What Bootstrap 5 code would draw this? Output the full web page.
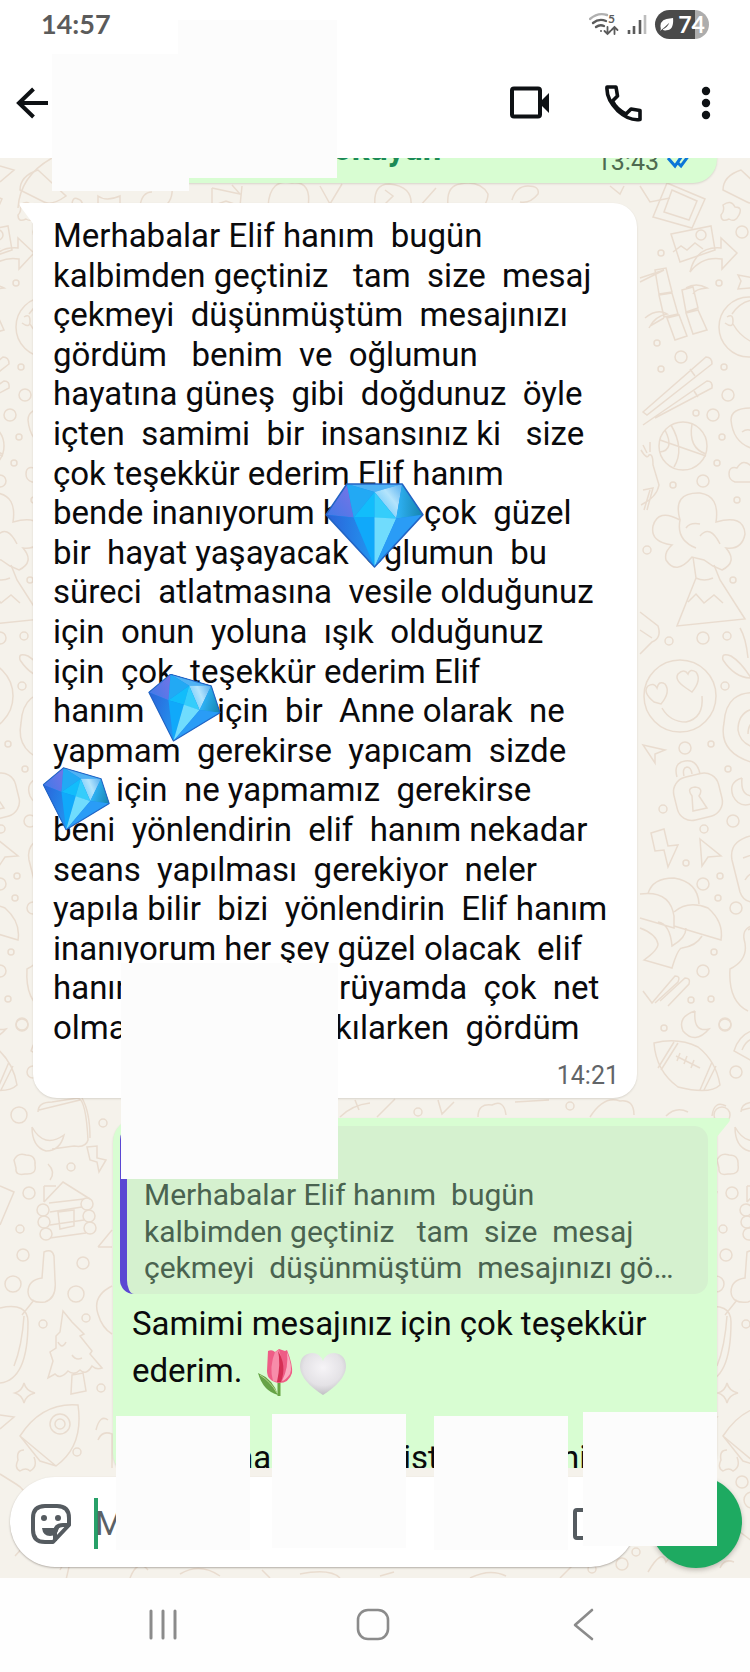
<!DOCTYPE html>
<html lang="tr">
<head>
<meta charset="utf-8">
<meta name="viewport" content="width=device-width, initial-scale=1">
<title>Sohbet</title>
<link href="https://cdn.jsdelivr.net/npm/bootstrap@5.3.0/dist/css/bootstrap.min.css" rel="stylesheet">
<script src="https://cdn.jsdelivr.net/npm/bootstrap@5.3.0/dist/js/bootstrap.bundle.min.js" defer></script>
<style>
  :root { --paper: #f5f2eb; --sent: #d8fdd2; --ink: #0a0a0c; --patch: #fcfcfc; }
  body { font-family: Roboto, "Noto Sans", sans-serif; color: var(--ink); background: #fefefe; font-size: 33px; line-height: 1.2; }
  svg { display: block; }
  .screen { min-height: 100vh; }
  .status { height: 48px; padding: 0 41px 0 41px; color: #5b5b5b; }
  .clock { font: 700 27px/30px Lato, sans-serif; }
  .battery { width: 54px; height: 29px; border-radius: 15px; background: linear-gradient(90deg, #4a4a4a 74%, #adadad 74%); color: #fff; font: 700 23px/29px Lato, sans-serif; }
  .toolbar { height: 110px; padding: 0 34px 0 14px; }
  .toolbar-end { gap: 54px; }
  .icon-btn { border: 0; padding: 0; background: none; color: #0e1114; }
  .chat { background: var(--paper); min-height: 0; }
  .wallpaper { position: absolute; inset: 0; width: 100%; height: 100%; }
  .thread { padding: 0 33px; gap: 20px; flex: 1 1 0; min-height: 0; overflow: hidden; }
  .bubble { position: relative; white-space: pre; border-radius: 24px; box-shadow: 0 1px 2px rgba(90, 80, 60, .18); }
  .received { width: 604px; background: #fff; padding: 13px 18px 7px 20px; border-top-left-radius: 0; }
  .sent { width: 604px; background: var(--sent); }
  .sent-old { margin-top: -55px; height: 80px; padding: 26px 24px 0 220px; }
  .sent-new { padding: 8px 9px 0 7px; border-top-right-radius: 0; }
  .strong-green { font-weight: 700; color: #1b8a56; }
  .stamp { font-size: 25px; line-height: 30px; color: #626568; }
  .sent .stamp { color: #4e6a50; }
  .received .stamp { margin-top: 14px; }
  .tail-start, .tail-end { position: absolute; top: 0; }
  .tail-start { left: -14px; }
  .tail-end { right: -13px; }
  .gap-h { display: inline-block; width: 164px; }
  .gap-s { display: inline-block; width: 63px; }
  .gap-b { display: inline-block; width: 371px; }
  .gap-r { display: inline-block; width: 286px; }
  .gap-k { display: inline-block; width: 282px; }
  .gem { position: absolute; }
  .gem-1 { left: 291px; top: 280px; }
  .gem-2 { left: 107px; top: 471px; }
  .gem-3 { left: 2px; top: 564px; }
  .quote { background: #d5f1cf; border-radius: 14px; border-left: 7px solid #5b47d3; padding: 51px 20px 7px 17px; font-size: 30px; line-height: 1.212; color: #4a6350; }
  .reply { padding: 10px 12px 0; }
  .emoji { display: inline-block; vertical-align: -16px; }
  .pieces { display: grid; grid-template-columns: 103px 168px 158px auto; }
  .composer { padding: 8px 8px 10px 10px; gap: 14px; }
  .pill { height: 90px; border-radius: 45px; background: #fff; padding: 3px 30px 0 20px; box-shadow: 0 1px 2px rgba(60, 50, 40, .35); color: #555b60; }
  .caret { width: 4px; height: 51px; background: #28a068; margin-left: 22px; }
  .field { border: 0; outline: 0; background: none; padding: 0; margin-left: -3px; min-width: 0; color: var(--ink); }
  .field::placeholder { color: #5b6166; opacity: 1; }
  .mic { width: 92px; height: 92px; background: #1eaa61; border: 0; box-shadow: 0 2px 5px rgba(60, 50, 40, .3); }
  .sysnav { height: 94px; padding: 0 62px 0 58px; background: #fefefe; color: #8b8b8b; }
  .cover { position: absolute; width: 134px; height: 134px; background: var(--patch); z-index: 3; }
  .cover-a { left: 52px; top: 54px; width: 137px; height: 137px; }
  .cover-b { left: 178px; top: 20px; width: 159px; height: 158px; }
  .cover-c { left: 88px; top: 760px; width: 217px; height: 216px; }
  .cover-d { left: 116px; bottom: 28px; }
  .cover-e { left: 272px; bottom: 30px; }
  .cover-f { left: 434px; bottom: 28px; }
  .cover-g { left: 583px; bottom: 32px; }
</style>
</head>
<body>
<svg width="0" height="0" class="position-absolute" aria-hidden="true">
  <defs>
    <linearGradient id="gd" x1="0" x2="1"><stop offset="0" stop-color="#2b62d9"/><stop offset="1" stop-color="#2297f0"/></linearGradient>
    <linearGradient id="gl" x1="0" x2="1" y1="1" y2="0"><stop offset="0" stop-color="#3f7ae8"/><stop offset="1" stop-color="#7b73e6"/></linearGradient>
    <linearGradient id="gr" x1="0" x2="1"><stop offset="0" stop-color="#30b4f8"/><stop offset="1" stop-color="#1583ad"/></linearGradient>
    <linearGradient id="gw" x1="0" x2="1" y1="1" y2="0"><stop offset="0" stop-color="#45baf9"/><stop offset=".6" stop-color="#b4e4fc"/><stop offset="1" stop-color="#54aef0"/></linearGradient>
    <symbol id="gem" viewBox="0 0 100 86">
      <path d="M22 1H78L99 32 50 85 1 32Z" fill="#188ff0"/>
      <path d="M22 1 1 32 29 35Z" fill="url(#gl)"/>
      <path d="M1 32 29 35 50 85Z" fill="url(#gd)"/>
      <path d="M22 1H78L50 9Z" fill="#4fb2f4"/>
      <path d="M22 1 50 9 29 35Z" fill="#22a9f4"/>
      <path d="M78 1 50 9 72 36Z" fill="url(#gw)"/>
      <path d="M78 1 99 32 72 36Z" fill="url(#gr)"/>
      <path d="M50 9 29 35H50Z" fill="#12bdfb"/>
      <path d="M50 9 72 36H50Z" fill="#35cdfb"/>
      <path d="M29 35H50V85Z" fill="#10a9fa"/>
      <path d="M50 35 72 36 50 85Z" fill="#70dcfd"/>
      <path d="M72 36 99 32 50 85Z" fill="#2a9cf6"/>
      <path d="M22 1H78L99 32 50 85 1 32Z" fill="none" stroke="#2364c4" stroke-width="1.5" stroke-linejoin="round"/>
    </symbol>
  </defs>
</svg>

<div class="screen d-flex flex-column position-relative">
  <header class="bg-white">
    <div class="status d-flex align-items-center justify-content-between">
      <span class="clock">14:57</span>
      <div class="d-flex align-items-center">
        <svg width="30" height="24" viewBox="0 0 30 24" fill="none" stroke="currentColor" stroke-width="2.4" stroke-linecap="round"><path d="M1 7Q9 0 18 3" stroke="#b0b0b0"/><path d="M4 11Q10 6 17 9M7 15Q11 12 15 14"/><circle cx="12" cy="19" r="1" fill="currentColor" stroke="none"/><path d="M18.500 15v7m-3-3 3 3 3-3M25.500 22v-7m-3 3 3-3 3 3" stroke-width="1.800"/><text x="19" y="11" font-family="Lato" font-size="12" font-weight="700" fill="currentColor" stroke="none">5</text></svg>
        <svg class="ms-2 me-2" width="20" height="22" viewBox="0 0 20 22" fill="none" stroke="currentColor" stroke-width="2.600"><path d="M2 17v4M7 13v8M13 7v14"/><path d="M18 2v19" stroke="#bdbdbd"/></svg>
        <span class="battery d-flex align-items-center justify-content-center"><svg width="15" height="15" viewBox="0 0 16 16"><path d="M2 13Q0 4 8 2l7-1q1 13-7 13-3 1-4-1Q9 11 11 6 7 10 1 15Z" fill="#fff"/></svg><span class="ms-1">74</span></span>
      </div>
    </div>
    <div class="toolbar d-flex align-items-center">
      <button class="icon-btn" aria-label="Geri"><svg width="36" height="36" viewBox="0 0 36 36" fill="none" stroke="currentColor" stroke-width="4"><path d="M34 18H5M19.500 4 5 18l14.500 14"/></svg></button>
      <div class="toolbar-end d-flex align-items-center ms-auto">
        <button class="icon-btn" aria-label="Görüntülü arama"><svg width="40" height="36" viewBox="0 0 40 36"><rect x="2" y="3.500" width="28" height="28" rx="2" fill="none" stroke="currentColor" stroke-width="4"/><path d="M31 16 39 8v20l-8-8Z" fill="currentColor"/></svg></button>
        <button class="icon-btn" aria-label="Sesli arama"><svg width="38" height="38" viewBox="0 0 38 38" fill="none" stroke="currentColor" stroke-width="3.600" stroke-linejoin="round"><path d="M3 3h9l1.500 9-5 5Q12 25 22 30l5-5 9 1.500v9Q25 37 14 27 2 15 3 3Z"/></svg></button>
        <button class="icon-btn" aria-label="Diğer seçenekler"><svg width="20" height="36" viewBox="0 0 20 36" fill="currentColor"><circle cx="10" cy="6" r="4.200"/><circle cx="10" cy="18" r="4.200"/><circle cx="10" cy="30" r="4.200"/></svg></button>
      </div>
    </div>
  </header>

  <main class="chat position-relative d-flex flex-column flex-fill">
    <svg class="wallpaper" aria-hidden="true">
      <defs>
        <g id="strip">
          <path d="M667 183 705 199 692 228 653 217ZM672 190l25 11-8 19-25-8Z"/>
          <path d="M723 190q0-14 18-20l28 26q-14 10-22 6ZM723 205q8-6 12 2 8 0 4 8-4 8-10 4-8 4-8-4 4-4 2-10Z"/>
          <path d="M671 234 711 226 715 250 680 262ZM673 252l8-6 6 4 8-7 8 6"/><circle cx="701" cy="235" r="5"/>
          <path d="M690 272Q696 246 721 248V238L737 253 722 269V259Q702 256 690 272Z"/>
          <path d="M738 275l22 4v8l-22 2 3-8Z"/>
          <path d="M655 270 666 268 672 292 659 294ZM659 295 672 293 678 314 664 317ZM667 318 679 315 687 336 675 340ZM682 290 693 287 698 308 686 312ZM686 313 698 310 707 330 693 334ZM640 278l24-8-24 12M686 288q10-6 21 0-12 1-14 6M645 318q12-10 22-4-12 2-18 14M650 326l14-8"/>
          <circle cx="749" cy="327" r="30"/><path d="M727 317q6-4 6 4t-8 2M732 314Q740 302 752 300M733 324Q742 340 760 345"/>
          <path d="M643 412 706 357q6 0 6 7L647 415ZM643 425 707 381q6 0 5 7L655 418M690 369l5 7M694 391l4 6"/>
          <circle cx="683" cy="446" r="24"/><path d="M660 440 706 456M671 425q14 24 3 42M692 424q-4 24 14 30M665 430q10 20-5 22"/>
          <path d="M731 420q0-12 20-12h20M731 420q2 22 20 28M742 432q8-6 14 4"/>
          <path d="M729 474q0-8 8-6 6-10 14-2 8 4 6 10 4 6-4 6h-18q-6-2-6-8"/>
          <path d="M643 445l4 8M650 442l0 10M641 450q6 10 8 5 4-2 4 10l6 20q-2 12-18 20M643 490l10-2-6 22M650 490l-6 20"/>
          <path d="M680 520Q672 492 700 493 720 496 716 522 744 514 745 534 742 550 726 548 738 562 722 570L713 566 704 560 692 557Q676 576 666 560 664 552 672 545 650 542 653 526 658 508 680 520Q676 540 696 548M700 536q10-12 20 8M686 528q4-6 14-4"/>
          <path d="M693 557 696 578 677 626 745 619 720 580 714 565M696 578q8 4 17 0M688 602l8-8 8 9 10-8 9 8"/>
          <path d="M640 612l18 14q4 12-6 16l-12 12M640 630l12 8"/>
          <circle cx="680" cy="696" r="36"/><path d="M654 702q-12-10-6-16 6-4 9 2 2-8 8-4 6 8-4 20ZM686 688q-12-8-8-14 6-6 10 0 2-6 8-2 6 8-4 20ZM662 708q8 14 24 14 18-4 16-26"/>
          <path d="M723 660q-2-8 8-4 10 6 20 22-16 0-28-18M740 628q6 10 8 30"/>
          <path d="M760 693q-34-4-36 30-6 30 30 40M758 708q-20 2-20 22 2 14 18 18M758 720q-10 2-10 14"/>
          <path d="M643 745 665 750 655 754 655 763Z"/>
          <rect x="675" y="775" width="46" height="44" rx="15" transform="rotate(-14 697 797)"/><path d="M677 777q-4-14 8-16 12-2 15 13M684 776q-2-8 3-9 4 0 5 7M692 796q-6-8 3-9 9 1 4 9l8 12-14 3Z"/>
          <path d="M742 778q-14 4-9 18 6 12 18 8M742 778q-2 20 14 18"/>
          <path d="M651 833 664 829 668 846 678 845 668 867 664 850 655 851ZM700 839 721 856 708 857 702 866Z"/>
          <path d="M760 834q-32 4-28 26l8 32q4 12 18 10M743 858l14-5M745 880q4-8 14-8"/>
          <path d="M648 894q4-16 26-16 24 4 25 26M640 894q30-4 34 22v12l-34-10M674 912q14-12 34-4 16 14 13 32L674 926M640 928q16 6 18 16 0 6-14 16l28 8q6-20 10-20 14-2 20-12M658 922q12 2 14 24 14-8 14-18"/>
          <path d="M760 925q-18 0-16 14 6 20-14 30-2 32 18 42M748 930q6-4 10 2"/>
          <path d="M643 991 652 1003 675 976q6 0 3 6L655 1003M660 1001 685 978q6 0 4 6L668 1006"/>
          <path d="M695 1011q-18 6-12 20 12 14 26-2-16 4-14-18"/>
          <path d="M654 1043q24-6 44 4 18 14 22 38-10 10-42 2-22-16-24-44ZM674 1042 658 1068M678 1043 661 1070M712 1062 700 1090M716 1066 704 1090M676 1056l24 12M680 1053l-3 8M687 1056l-3 8M694 1060l-3 8"/>
          <path d="M760 1029q-20 2-26 22l18 10M742 1050q6-14 16-10"/>
        </g>
        <g id="dots">
          <circle cx="661" cy="253" r="3"/><circle cx="742" cy="232" r="6"/><circle cx="719" cy="283" r="3"/><circle cx="657" cy="343" r="3"/><circle cx="681" cy="357" r="6"/><circle cx="661" cy="369" r="3"/><circle cx="724" cy="367" r="3"/><circle cx="728" cy="395" r="6"/><circle cx="696" cy="413" r="3"/><circle cx="713" cy="415" r="6"/><circle cx="722" cy="437" r="3"/><circle cx="717" cy="463" r="3"/><circle cx="703" cy="481" r="6"/><circle cx="673" cy="485" r="3"/><circle cx="737" cy="500" r="3"/><circle cx="647" cy="550" r="4"/><circle cx="733" cy="580" r="3"/><circle cx="703" cy="638" r="6"/><circle cx="727" cy="636" r="4"/><circle cx="669" cy="641" r="4"/><circle cx="725" cy="686" r="4"/><circle cx="685" cy="748" r="6"/><circle cx="711" cy="744" r="3"/><circle cx="728" cy="769" r="3"/><circle cx="663" cy="809" r="4"/><circle cx="733" cy="821" r="6"/><circle cx="704" cy="829" r="4"/><circle cx="686" cy="863" r="3"/><circle cx="720" cy="876" r="3"/><circle cx="703" cy="884" r="6"/><circle cx="718" cy="898" r="3"/><circle cx="736" cy="908" r="6"/><circle cx="714" cy="952" r="3"/><circle cx="703" cy="971" r="6"/><circle cx="691" cy="1000" r="3"/><circle cx="711" cy="999" r="3"/><circle cx="664" cy="1028" r="3"/><circle cx="725" cy="1025" r="6"/><circle cx="736" cy="1072" r="6"/>
        </g>
        <g id="lower">
          <path d="M38 1112q0-10 14-10l26-4q8 2 10 42-2 8-14 6l-22 3M39 1110 80 1100M82 1098q8 14 8 40M32 1127q12 22 32 8-4 16-18 16-14-4-14-24"/>
          <path d="M14 1160q4-8 12-5 10 0 9 10 2 10-10 9-10 2-9-6ZM87 1147 97 1146 97 1158 106 1160 99 1172 97 1162 90 1160ZM48 1164q8 8 2 16"/>
          <path d="M44 1202 63 1182 90 1199M44 1186h12M44 1186v16M49 1203 84 1199M50 1212 82 1207M50 1225 84 1220M50 1238 86 1233M58 1212l16-2v16l-14 3Z"/><circle cx="43" cy="1210" r="6"/><circle cx="87" cy="1204" r="6"/><circle cx="44" cy="1222" r="6"/><circle cx="89" cy="1216" r="6"/><circle cx="46" cy="1234" r="6"/><circle cx="90" cy="1228" r="6"/>
          <path d="M0 1186 14 1192 0 1225M98 1247 112 1230M98 1247h14M44 1252q8-4 10 4l1 24q2 18-10 22-16 2-17-10 0-12 14-14ZM22 1315 34 1300M0 1308q28-6 28 14Q28 1380 0 1383M14 1366q8-20 10-50"/>
          <path d="M63 1311 72 1322 84 1334 80 1336 92 1351 90 1354 102 1368Q96 1370 92 1366 86 1376 80 1370 74 1376 68 1371 60 1380 55 1374L48 1378 53 1361 50 1352 56 1348 56 1336 60 1332ZM72 1375 83 1373 86 1391 71 1394ZM58 1342q4 8 8 0M72 1355q4 6 10 3"/>
          <path d="M24 1383q2 8 11 10-9 2-11 10-2-8-9-10 7-2 9-10Z"/>
          <path d="M20 1436Q42 1402 78 1405 84 1446 56 1466L40 1461ZM20 1436l36 30M24 1450q-8 0-6 10-4 8 2 11 6-4 10 0 8-4 4-14M0 1415l14 2-14 12"/><circle cx="60" cy="1424" r="10"/><circle cx="60" cy="1424" r="5"/>
          <path d="M112 1286q-20 10-14 28 4 14 14 20M96 1430q4-16 12-10M98 1440q4-10 14-6v34M0 1474l16 10q10 6 10 14M60 1570q20-40 60-46M15 1556l22-24 34 26-5 22M180 1574q20-12 40 2M262 1570l8 8"/>
          <circle cx="19" cy="1115" r="8"/><circle cx="103" cy="1123" r="4"/><circle cx="71" cy="1167" r="4"/><circle cx="29" cy="1193" r="6"/><circle cx="20" cy="1229" r="4"/><circle cx="23" cy="1255" r="6"/><circle cx="83" cy="1263" r="6"/><circle cx="13" cy="1284" r="8"/><circle cx="76" cy="1294" r="8"/><circle cx="43" cy="1324" r="4"/><circle cx="86" cy="1318" r="4"/><circle cx="101" cy="1388" r="4"/><circle cx="77" cy="1452" r="4"/><circle cx="22" cy="1024" r="6"/>
        </g>
      </defs>
      <g transform="translate(0 -158)" fill="none" stroke="#e9dccf" stroke-width="1.500">
        <use href="#strip"/><use href="#strip" x="-703"/>
        <use href="#dots"/><use href="#dots" x="-703"/>
        <use href="#lower"/><use href="#lower" x="703"/>
        <path d="M18 208Q20 176 52 158M0 166l14 4-14 12M72 206q0-10 6-7 6 2 4 10M98 196q8 6 22 0v10h-22ZM140 206q2-14 12-14M160 208q14-4 12-24M212 188 240 194 232 185M212 188v18l14-5 14 5 2-20M268 206q2-28 24-23 20-2 16 24M320 186l10 18 12-20M375 206q-2-22 14-22 24 2 22 22M385 190l8 6-8 8M420 206l16-18M448 206q-2-20 12-22 20-4 28 10 0 6-4 12M512 200q4-14 16-14 12 0 10 8-8 10-18 8M610 186l10 8 4-8M640 186l10 16 20-4"/>
        <path d="M340 1117q12-12 30-14M355 1100l4 10M377 1117l18-18M438 1100l4 14 12-12M478 1117q0-14 14-12 12-6 14 10M515 1102l34-2M590 1117q14-22 30-16 14-2 14 14M666 1116q10-10 22-4M712 1116q2-16 14-10"/>
        <path d="M130 1578q8-20 18-8M300 1574q30-6 40 4M380 1576l14-4M470 1578q20-10 36-2M560 1578l12-12M648 1572q14-24 18-10 14-18 18 0 10-16 12 4M720 1568q4-10 14-6"/>
        <circle cx="636" cy="1552" r="4"/><circle cx="622" cy="1564" r="6"/><circle cx="592" cy="1569" r="4"/><circle cx="418" cy="1112" r="4"/><circle cx="570" cy="1106" r="4"/><circle cx="742" cy="1482" r="6"/><circle cx="752" cy="1500" r="8"/>
      </g>
    </svg>

    <section class="thread d-flex flex-column position-relative">
      <div class="bubble sent sent-old align-self-end flex-shrink-0 d-flex justify-content-between">
        <span class="strong-green">okuyun</span>
        <span class="stamp d-flex align-items-center mt-2"><span class="pt-1">13:43</span><svg class="ms-2" width="26" height="22" viewBox="0 0 26 22" fill="none" stroke="#0b76d8" stroke-width="3"><path d="M1 9l7 8L17 4M11 14l3 3L25 2"/></svg></span>
      </div>

      <article class="bubble received flex-shrink-0"><svg class="tail-start" width="15" height="22" viewBox="0 0 15 22"><path d="M2 0H15V22L1 3Q0 0 2 0Z" fill="#fff"/></svg><div>Merhabalar Elif hanım  bugün
kalbimden geçtiniz   tam  size  mesaj
çekmeyi  düşünmüştüm  mesajınızı
gördüm   benim  ve  oğlumun
hayatına güneş  gibi  doğdunuz  öyle
içten  samimi  bir  insansınız ki   size
çok teşekkür ederim Elif hanım
<span class="gap-b">bende inanıyorum h</span>çok  güzel
bir  hayat yaşayacak  oğlumun  bu
süreci  atlatmasına  vesile olduğunuz
için  onun  yoluna  ışık  olduğunuz
için  çok  teşekkür ederim Elif
<span class="gap-h">hanım</span>için  bir  Anne olarak  ne
yapmam  gerekirse  yapıcam  sizde
<span class="gap-s"></span>için  ne yapmamız  gerekirse
beni  yönlendirin  elif  hanım nekadar
seans  yapılması  gerekiyor  neler
yapıla bilir  bizi  yönlendirin  Elif hanım
inanıyorum her şey güzel olacak  elif
<span class="gap-r">hanım</span>rüyamda  çok  net
<span class="gap-k">olma</span>kılarken  gördüm</div><div class="stamp text-end">14:21</div><svg class="gem gem-1" width="101" height="85"><use href="#gem" width="101" height="85"/></svg><svg class="gem gem-2" width="84" height="74" viewBox="0 0 84 74"><g transform="rotate(16 42 37)"><use href="#gem" x="4" y="4" width="76" height="65"/></g></svg><svg class="gem gem-3" width="78" height="70" viewBox="0 0 78 70"><g transform="rotate(16 39 35)"><use href="#gem" x="4" y="4" width="70" height="61"/></g></svg><div class="cover cover-c"></div></article>

      <article class="bubble sent sent-new align-self-end flex-shrink-0 flex-fill"><svg class="tail-end" width="14" height="20" viewBox="0 0 14 20"><path d="M0 0H12Q15 1 13 4L0 20Z" fill="#d8fdd2"/></svg><div class="quote">Merhabalar Elif hanım  bugün
kalbimden geçtiniz   tam  size  mesaj
çekmeyi  düşünmüştüm  mesajınızı gö…</div><div class="reply">Samimi mesajınız için çok teşekkür
ederim. <svg class="emoji" width="48" height="55" viewBox="0 0 48 55"><path d="M28 34v19" stroke="#69a545" stroke-width="3"/><path d="M27 52Q12 48 7 30 22 36 27 52Z" fill="#66a347"/><path d="M9 32Q20 39 26 50" stroke="#b5d68c" fill="none"/><path d="M17 8Q21 6 24 9L28 6 34 8 36 7Q42 22 41 30 38 40 28 40 16 38 16 28Z" fill="#ee5d86"/><path d="M24 9Q18 24 22 38L28 39Q34 22 28 7Z" fill="#f78daa"/><path d="M27 8Q36 22 30 39L26 39Q30 20 27 8Z" fill="#d52f55"/><path d="M36 9Q42 24 39 31 34 38 31 38 38 24 36 9Z" fill="#fbabc0"/></svg><svg class="emoji" width="48" height="55" viewBox="0 0 48 55"><defs><radialGradient id="hw" cx=".5" cy=".35" r=".7"><stop offset="0" stop-color="#f6f4f7"/><stop offset=".6" stop-color="#e4e2e6"/><stop offset="1" stop-color="#b9b8bc"/></radialGradient></defs><path d="M24 52Q2 38 1 24 1 11 13 10 21 10 24 18 27 10 35 10 47 11 47 24 46 38 24 52Z" fill="url(#hw)"/></svg>
 
<div class="pieces"><span></span><span>na</span><span>ist</span><span>ni</span></div></div></article>
    </section>

    <form class="composer d-flex align-items-center position-relative">
      <div class="pill d-flex align-items-center flex-fill">
        <button type="button" class="icon-btn text-reset" aria-label="Emoji"><svg width="42" height="42" viewBox="0 0 42 42" fill="none" stroke="currentColor" stroke-width="4"><path d="M15 3h12q12 0 12 12v7L23 39h-8Q3 39 3 27V15Q3 3 15 3ZM39 22h-6q-8 0-8 8v8" stroke-linejoin="round"/><path d="M12 25h17q-2 8-9 8t-8-8Z" fill="currentColor" stroke="none"/><circle cx="14" cy="15" r="3" fill="currentColor" stroke="none"/><circle cx="28" cy="15" r="3" fill="currentColor" stroke="none"/></svg></button>
        <span class="caret"></span>
        <input class="field flex-fill" type="text" placeholder="Mesaj" aria-label="Mesaj">
        <button type="button" class="icon-btn text-reset" aria-label="Kamera"><svg width="34" height="34" viewBox="0 0 34 34" fill="none" stroke="currentColor" stroke-width="4"><rect x="3" y="3" width="28" height="28" rx="2"/></svg></button>
      </div>
      <button type="button" class="mic rounded-circle flex-shrink-0" aria-label="Sesli mesaj"></button>
      <div class="cover cover-d"></div>
      <div class="cover cover-e"></div>
      <div class="cover cover-f"></div>
      <div class="cover cover-g"></div>
    </form>
  </main>

  <nav class="sysnav d-flex align-items-center" aria-label="Sistem">
    <button class="icon-btn text-reset col d-flex justify-content-center" aria-label="Son uygulamalar"><svg width="32" height="34" viewBox="0 0 32 34" stroke="currentColor" stroke-width="3" stroke-linecap="round"><path d="M4 3v27M16 3v27M28 3v27"/></svg></button>
    <button class="icon-btn text-reset col d-flex justify-content-center" aria-label="Ana ekran"><svg width="34" height="34" viewBox="0 0 34 34" fill="none" stroke="currentColor" stroke-width="2.600"><rect x="2" y="2" width="30" height="29" rx="10"/></svg></button>
    <button class="icon-btn text-reset col d-flex justify-content-center" aria-label="Geri dön"><svg width="24" height="34" viewBox="0 0 24 34" fill="none" stroke="currentColor" stroke-width="2.600" stroke-linecap="round" stroke-linejoin="round"><path d="M21 2 4 17 21 31"/></svg></button>
  </nav>

  <div class="cover cover-a"></div>
  <div class="cover cover-b"></div>
</div>
</body>
</html>
